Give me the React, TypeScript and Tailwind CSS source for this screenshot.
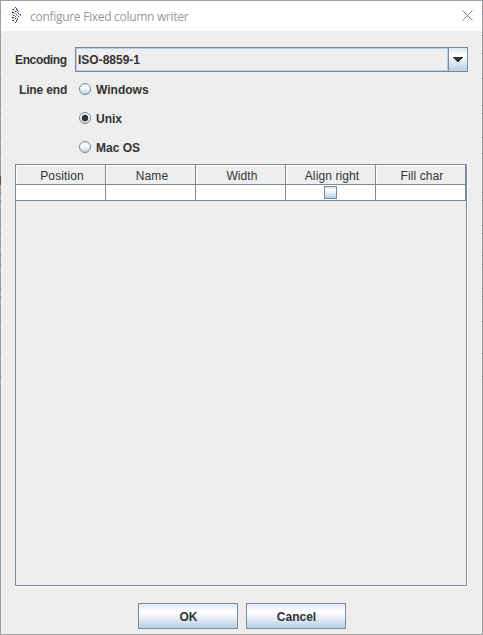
import React from 'react';

const ARIAL = "font-['Liberation_Sans',Arial,sans-serif]";

const NAVY = '#1d4466';
const MID = '#5b7c99';
const PALE = '#a9bccb';

const LOGO: [number, number, string][] = [
  [3, 0, NAVY], [2, 1, PALE], [4, 1, MID], [1, 2, NAVY], [4, 2, NAVY], [5, 2, PALE], [0, 2, MID],
  [2, 3, PALE], [5, 3, NAVY], [0, 4, PALE], [3, 4, NAVY], [4, 4, PALE], [6, 4, MID],
  [0, 5, NAVY], [1, 5, NAVY], [5, 5, MID], [2, 6, MID], [3, 6, PALE], [6, 6, NAVY],
  [0, 7, PALE], [4, 7, NAVY], [8, 7, NAVY], [7, 7, PALE], [1, 8, NAVY], [2, 8, PALE], [5, 8, MID], [8, 8, MID],
  [3, 9, MID], [6, 9, NAVY], [0, 10, NAVY], [1, 10, NAVY], [4, 10, PALE],
  [3, 11, NAVY], [5, 11, MID], [0, 11, PALE], [2, 12, PALE], [5, 12, NAVY],
  [0, 13, MID], [1, 13, NAVY], [4, 13, NAVY], [2, 14, PALE], [4, 14, MID], [3, 15, NAVY],
];

const EDGE_MARKS = [35, 53, 78, 105, 113, 137, 153, 192, 200, 225, 233, 255, 264, 288, 296, 321, 353, 376];

function Logo() {
  return (
    <svg className="mt-[6px] ml-[11px] h-4 w-[10px] self-start" viewBox="0 0 10 16" shapeRendering="crispEdges">
      {LOGO.map(([x, y, c]) => <rect key={`${x}-${y}`} x={x} y={y} width="1" height="1" fill={c} />)}
    </svg>
  );
}

function Edge({ side }: { side: 'left' | 'right' }) {
  return (
    <svg
      className={side === 'left' ? 'absolute -top-px -left-px h-[400px] w-px' : 'absolute -top-px -right-px h-[400px] w-px'}
      viewBox="0 0 1 400"
      shapeRendering="crispEdges"
    >
      <rect y="11" width="1" height="4" fill="#8191a3" />
      {side === 'left' && <rect y="176" width="1" height="9" fill="#704840" />}
      {EDGE_MARKS.map((y) => <rect key={y} y={y} width="1" height="1" fill="#6b7784" />)}
    </svg>
  );
}

function Radio({ label, checked }: { label: string; checked?: boolean }) {
  return (
    <label className="flex h-[29px] items-start pt-2">
      <svg className="h-3 w-3" viewBox="0 0 12 12">
        <defs>
          <linearGradient id="radioFill" x1="0" y1="0" x2="0" y2="1">
            <stop offset="0" stopColor="#dde8f3" />
            <stop offset=".35" stopColor="#ffffff" />
            <stop offset="1" stopColor="#b8cfe5" />
          </linearGradient>
        </defs>
        <circle cx="6" cy="6" r="5.5" fill="url(#radioFill)" stroke="#7a8a99" />
        {checked && <circle cx="6" cy="6" r="3.2" fill="#333333" />}
      </svg>
      <span className="ml-[5px]">{label}</span>
    </label>
  );
}

function Button({ children }: { children: string }) {
  return (
    <button className="h-[26px] w-[100px] border border-[#7a8a99] bg-[linear-gradient(#dde8f3_0%,#ffffff_30%,#ffffff_36%,#b8cfe5_100%)] pt-[2px] pl-[2px] text-center font-bold">
      {children}
    </button>
  );
}

export default function App() {
  return (
    <div className={`relative flex h-[635px] w-[483px] flex-col border border-[#a0a0a0] bg-[#eeeeee] text-[12px] leading-[15px] text-[#333333] ${ARIAL}`}>
      <Edge side="left" />
      <Edge side="right" />
      <header className="flex h-[30px] shrink-0 items-center bg-white pb-px">
        <Logo />
        <span className="ml-2 pt-px font-['Open_Sans','Noto_Sans',sans-serif] text-[12px] tracking-[-0.29px] text-[#999999]">configure Fixed column writer</span>
        <svg className="mr-[9px] ml-auto h-[11px] w-[11px]" viewBox="0 0 11 11">
          <path d="M.5 .5l10 10M10.5 .5l-10 10" stroke="#858585" fill="none" />
        </svg>
      </header>
      <div className="mt-4 flex h-[25px] items-center pr-[14px] font-bold">
        <span className="w-[74px] pt-[2px] pl-[14px] tracking-[-0.36px]">Encoding</span>
        <div className="flex h-[25px] flex-1 border border-[#7a8a99]">
          <div className="flex flex-1 items-center border border-[#b8cfe5] pt-px pl-px">ISO-8859-1</div>
          <div className="flex w-[19px] items-center justify-center border-l border-[#7a8a99] bg-[linear-gradient(#dde8f3_0%,#ffffff_30%,#b8cfe5_100%)]">
            <svg className="h-[5px] w-[10px]" viewBox="0 0 10 5" shapeRendering="crispEdges">
              <path d="M0 0h10v1h-1v1h-1v1h-1v1h-1v1h-2v-1h-1v-1h-1v-1h-1v-1h-1z" fill="#333333" />
            </svg>
          </div>
        </div>
      </div>
      <div className="mt-[3px] flex h-[89px] font-bold">
        <span className="w-[78px] pt-2 pl-[18px] tracking-[-0.15px]">Line end</span>
        <div>
          <Radio label="Windows" />
          <Radio label="Unix" checked />
          <Radio label="Mac OS" />
        </div>
      </div>
      <div className="ml-[14px] flex h-[423px] w-[453px] shrink-0 border-r border-b border-white">
        <div className="flex-1 border border-[#7a8a99]">
          <div className="flex h-5 w-[450px]">
            {['Position', 'Name', 'Width', 'Align right', 'Fill char'].map((h) => (
              <div key={h} className="flex w-[90px] items-center justify-center border-r border-b border-[#7a8a99]">
                <div className="h-full w-full border-t border-l border-white pt-[3px] pl-[2px] text-center tracking-[0.1px]">{h}</div>
              </div>
            ))}
          </div>
          <div className="flex h-4 w-[450px] bg-white">
            {[0, 1, 2, 3, 4].map((i) => (
              <div key={i} className="flex w-[90px] items-center justify-center border-r border-b border-[#7a8a99]">
                {i === 3 && <span className="h-[13px] w-[13px] border border-[#7a8a99] bg-[linear-gradient(#dde8f3,#ffffff_30%,#b8cfe5)]" />}
              </div>
            ))}
          </div>
        </div>
      </div>
      <div className="mt-4 flex justify-center gap-2">
        <Button>OK</Button>
        <Button>Cancel</Button>
      </div>
    </div>
  );
}
